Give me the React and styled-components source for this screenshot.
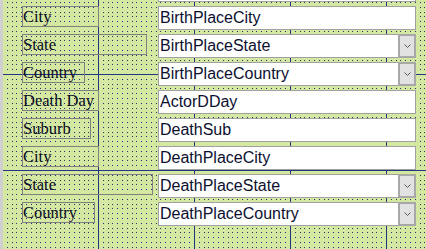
import styled, { createGlobalStyle } from "styled-components";

const GlobalStyle = createGlobalStyle`
  html, body {
    margin: 0;
    padding: 0;
    background: #d4e8a2;
  }
`;

// 24px tile = 5 dots at 20 per inch, rounded to whole pixels
const dots = `url("data:image/svg+xml,%3Csvg xmlns='http://www.w3.org/2000/svg' width='24' height='24'%3E%3Cg fill='%23233070'%3E${[0, 5, 10, 14, 19]
  .map((y) =>
    [0, 5, 10, 14, 19]
      .map((x) => `%3Crect x='${x}' y='${y}' width='1' height='1'/%3E`)
      .join("")
  )
  .join("")}%3C/g%3E%3C/svg%3E")`;

const Canvas = styled.div`
  width: 426px;
  height: 249px;
  overflow: hidden;
  box-sizing: border-box;
  border-left: 3px solid #cfcfcf;
  background-color: #d4e8a2;
  background-image: linear-gradient(to right, #22337f 1px, transparent 1px),
    linear-gradient(to bottom, #22337f 1px, transparent 1px), ${dots};
  background-size: 96px 100%, 100% 96px, 24px 24px;
  background-position: 2px 0, 0 74px, 2px 2px;
  background-origin: border-box;
`;

const Form = styled.div`
  display: flex;
  flex-direction: column;
  gap: 4px;
  margin-top: -22px;
  padding-left: 19px;
`;

const Row = styled.div`
  display: grid;
  grid-template-columns: 136px 258px;
  align-items: start;
  height: 24px;
`;

const Label = styled.div`
  width: ${(p) => p.$w}px;
  height: 21px;
  box-sizing: border-box;
  border: 1px solid #808080;
  font-family: "Liberation Serif", "Times New Roman", serif;
  font-size: 16.5px;
  line-height: 19px;
  color: #0a0a24;
  white-space: nowrap;
`;

const Field = styled.div`
  display: flex;
  height: 24px;
  box-sizing: border-box;
  border: 1px solid #a0a0a0;
  background: #fff;
`;

const Value = styled.div`
  flex: 1;
  padding-left: 1px;
  font-family: "Liberation Sans", Arial, sans-serif;
  font-size: 16px;
  line-height: 22px;
  color: #0c1030;
  white-space: nowrap;
  overflow: hidden;
`;

const DropButton = styled.div`
  width: 18px;
  margin: -1px -1px -1px 0;
  box-sizing: border-box;
  border: 2px solid #a8a8a8;
  background: #e2e2e2;
  display: flex;
  align-items: center;
  justify-content: center;
`;

const rows = [
  { label: "City", w: 77, value: "BirthPlaceCity" },
  { label: "State", w: 125, value: "BirthPlaceState", combo: true },
  { label: "Country", w: 63, value: "BirthPlaceCountry", combo: true },
  { label: "Death Day", w: 77, value: "ActorDDay" },
  { label: "Suburb", w: 69, value: "DeathSub" },
  { label: "City", w: 77, value: "DeathPlaceCity" },
  { label: "State", w: 131, value: "DeathPlaceState", combo: true },
  { label: "Country", w: 73, value: "DeathPlaceCountry", combo: true },
];

function Chevron() {
  return (
    <svg width="7" height="4" viewBox="0 0 7 4">
      <path d="M0.5 0.5 L3.5 3.5 L6.5 0.5" fill="none" stroke="#5a5a5a" strokeWidth="1" />
    </svg>
  );
}

export default function App() {
  return (
    <>
      <GlobalStyle />
      <Canvas>
        <Form>
          {/* control above the visible area: only its bottom edge shows */}
          <Row>
            <span />
            <Field />
          </Row>
          {rows.map((r, i) => (
            <Row key={i}>
              <Label $w={r.w}>{r.label}</Label>
              <Field>
                <Value>{r.value}</Value>
                {r.combo && (
                  <DropButton>
                    <Chevron />
                  </DropButton>
                )}
              </Field>
            </Row>
          ))}
        </Form>
      </Canvas>
    </>
  );
}
